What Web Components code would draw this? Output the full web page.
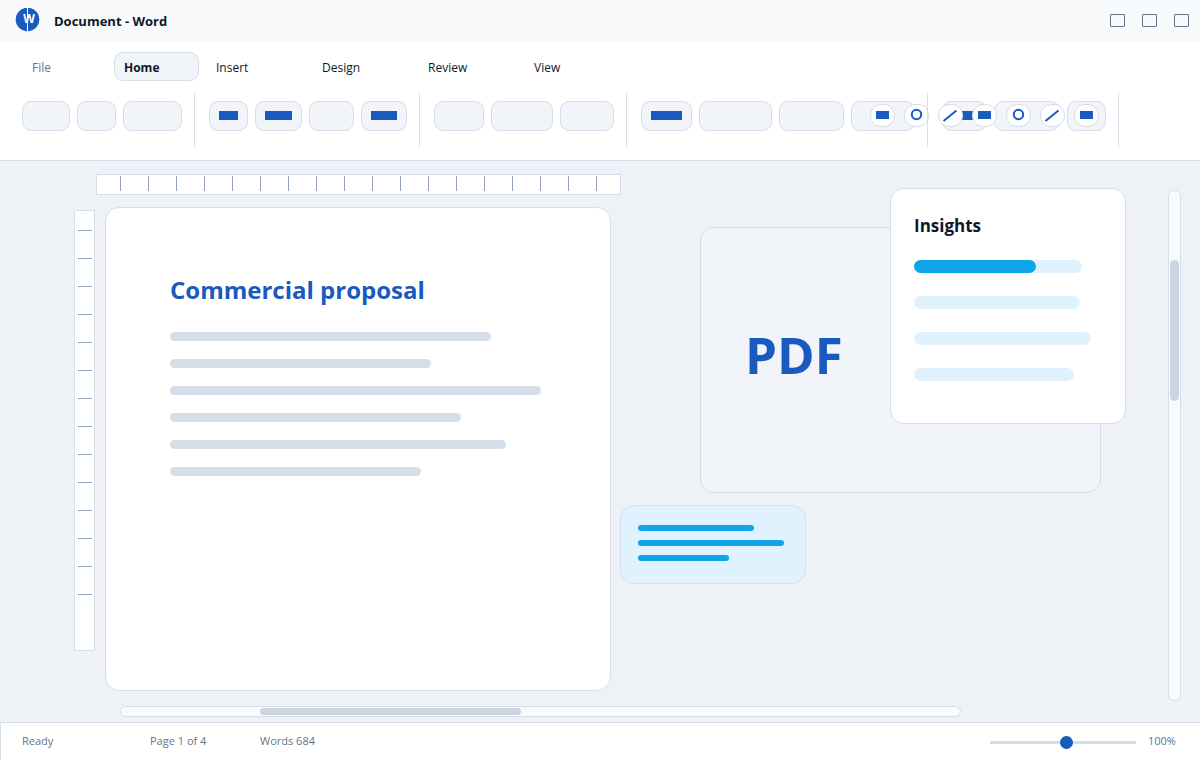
<!DOCTYPE html>
<html lang="en">
<head>
<meta charset="utf-8">
<title>Document - Word</title>
<style>
  :root {
    --ink: #0f172a;
    --muted: #64748b;
    --brand: #185abd;
    --line: #d6deea;
    --panel: #f1f4f9;
    --desk: #eef1f6;
    --bar: #f8fafc;
    --thumb: #cbd5e1;
    --sky: #e0f2fe;
    --accent: #0ea5e9;
  }
  html, body { height: 100%; margin: 0; }
  body { font: 12px/16px "Open Sans", "Noto Sans", sans-serif; color: var(--ink); }
</style>
</head>
<body>
<word-app>
  <title-bar slot="top">Document - Word</title-bar>
  <ribbon-bar slot="top"></ribbon-bar>
  <work-space>
    <doc-page slot="page" heading="Commercial proposal" lines="321,261,371,291,336,251"></doc-page>
    <pdf-card slot="stage">
      PDF
      <insight-card slot="over" heading="Insights"></insight-card>
    </pdf-card>
    <note-card slot="stage"></note-card>
  </work-space>
  <status-bar slot="bottom"></status-bar>
</word-app>

<script>
const define = (name, html, setup) => {
  const tpl = document.createElement('template');
  tpl.innerHTML = '<style>*{box-sizing:border-box}:host{display:block;box-sizing:border-box}</style>' + html;
  customElements.define(name, class extends HTMLElement {
    constructor() {
      super();
      this.attachShadow({ mode: 'open' }).append(tpl.content.cloneNode(true));
    }
    connectedCallback() { if (setup) setup(this, this.shadowRoot); }
  });
};

define('word-app', `
  <style>
    :host { display: flex; flex-direction: column; min-height: 100vh; }
    .main { flex: 1; display: grid; }
  </style>
  <slot name="top"></slot>
  <main class="main"><slot></slot></main>
  <slot name="bottom"></slot>`);

define('title-bar', `
  <style>
    :host { display: flex; align-items: center; height: 42px; padding: 0 11px 0 15px; background: var(--bar); }
    svg { display: block; flex: none; margin-bottom: 2px; }
    h1 { flex: 1; margin: 0 0 0 14px; font-size: 13px; line-height: 18px; font-weight: 700; }
    .win { display: flex; gap: 17px; margin-bottom: 1px; }
    button { width: 15px; height: 13px; padding: 0; border: 1px solid var(--muted); border-radius: 1px; background: none; }
  </style>
  <svg width="25" height="24" viewBox="0 0 25 24" aria-hidden="true">
    <circle cx="12.5" cy="11.5" r="11.8" fill="#185abd"/>
    <path d="M12.5 0V24" stroke="#fff" stroke-width="1"/>
    <text x="14" y="15" text-anchor="middle" font-size="12" font-weight="700" fill="#fff">W</text>
  </svg>
  <h1><slot></slot></h1>
  <div class="win">
    <button aria-label="Minimize"></button>
    <button aria-label="Maximize"></button>
    <button aria-label="Close"></button>
  </div>`);

define('ribbon-bar', `
  <style>
    :host { position: relative; height: 119px; padding: 10px 22px 0; background: #fff; border-bottom: 1px solid var(--line); }
    nav { display: flex; gap: 7px; }
    nav button { width: 99px; height: 29px; padding: 2px 0 0 9px; border: 1px solid transparent; border-radius: 9px;
      background: none; font: inherit; color: inherit; text-align: left; }
    nav .narrow { width: 85px; }
    nav .file { color: var(--muted); }
    nav .on { font-weight: 700; background: var(--panel); border-color: var(--line); }
    .tools { display: flex; margin-top: 12px; }
    .group { display: flex; align-items: flex-start; gap: 7px; height: 54px; padding-left: 14px; }
    .group:first-child { padding-left: 0; }
    .group::after { content: ""; position: relative; z-index: 1; width: 1px; height: 54px; margin-left: 5px; background: var(--line); }
    .group button { height: 30px; margin: 8px 0 0; padding: 9px; border: 1px solid var(--line); border-radius: 9px; background: var(--panel); }
    .group button i { display: block; height: 9px; margin-top: -1px; background: var(--brand); }
    .quick { position: absolute; right: 101px; top: 62px; display: flex; gap: 9px; }
    .quick button { display: block; width: 25px; height: 23px; padding: 0; border: 1px solid var(--line); border-radius: 11px; background: #fff; }
    svg { display: block; width: 23px; height: 21px; fill: none; stroke: var(--brand); stroke-width: 2; }
  </style>
  <nav aria-label="Tabs">
    <button class="narrow file">File</button><button class="narrow on">Home</button>
    <button>Insert</button><button>Design</button><button>Review</button><button>View</button>
  </nav>
  <div class="tools"></div>
  <div class="quick"></div>`, (el, root) => {
  // Tool widths by group; a trailing * marks a tool that carries a filled bar.
  const groups = ['48 39 59', '39* 47* 45 46*', '50 62 54', '51* 73 65 64', '45* 66 39'];
  root.querySelector('.tools').innerHTML = groups.map(g => '<div class="group">' +
    g.split(' ').map((t, i) => `<button aria-label="Tool ${i + 1}" style="width:${parseInt(t)}px">${t.endsWith('*') ? '<i></i>' : ''}</button>`).join('') +
    '</div>').join('');
  const icons = {
    Shape: '<path d="M5 6H18V14H5Z" fill="#185abd" stroke="none"/>',
    Circle: '<circle cx="11.5" cy="9.5" r="4.7"/>',
    Line: '<path d="M4.5 16L17.5 5.5"/>'
  };
  root.querySelector('.quick').innerHTML = ['Shape', 'Circle', 'Line', 'Shape', 'Circle', 'Line', 'Shape']
    .map(n => `<button aria-label="${n}"><svg viewBox="0 0 23 21">${icons[n]}</svg></button>`).join('');
});

define('ruler-strip', `
  <style>
    :host { display: flex; gap: 27px; overflow: hidden; background: #fff; border: 1px solid var(--line); height: 21px; padding: 1px 0 0 23px; }
    i { flex: none; width: 1px; height: 15px; background: #94a3b8; }
    :host([vertical]) { flex-direction: column; width: 21px; height: auto; padding: 19px 0 0 3px; }
    :host([vertical]) i { width: 14px; height: 1px; }
  </style>`, (el, root) => {
  for (let n = +el.getAttribute('ticks'); n > 0; n--) root.append(document.createElement('i'));
});

define('scroll-track', `
  <style>
    :host { height: 11px; padding: 1px 0 1px 139px; background: var(--bar); border: 1px solid var(--line); border-radius: 6px; }
    i { display: block; width: 261px; height: 7px; border-radius: 4px; background: var(--thumb); }
    :host([vertical]) { width: 13px; height: auto; padding: 69px 1px 0; }
    :host([vertical]) i { width: 9px; height: 141px; border-radius: 5px; }
  </style>
  <i></i>`);

define('work-space', `
  <style>
    :host { display: grid; grid-template-columns: minmax(0, 537fr) minmax(0, 557fr) 13px; grid-template-rows: 1fr 11px;
      row-gap: 15px; padding: 13px 19px 5px 74px; background: var(--desk); }
    .editor { display: flex; flex-direction: column; gap: 12px; }
    .top { margin: 0 -10px 0 22px; }
    .row { flex: 1; display: flex; gap: 10px; }
    .side { flex: none; margin: 3px 0 40px; }
    ::slotted(doc-page) { flex: 1; }
    .stage { display: flex; flex-direction: column; align-items: flex-start; gap: 12px; padding: 53px 0 0 9px; }
    .v { grid-column: 3; grid-row: 1 / 3; margin: 16px 0; }
    .h { grid-column: 1 / 3; grid-row: 2; margin: 0 207px 0 46px; }
  </style>
  <section class="editor">
    <ruler-strip class="top" ticks="18"></ruler-strip>
    <div class="row"><ruler-strip class="side" vertical ticks="14"></ruler-strip><slot name="page"></slot></div>
  </section>
  <section class="stage"><slot name="stage"></slot></section>
  <scroll-track class="v" vertical></scroll-track>
  <scroll-track class="h"></scroll-track>`);

define('doc-page', `
  <style>
    :host { padding: 64px; background: #fff; border: 1px solid var(--line); border-radius: 14px; }
    h2 { margin: 0 0 24px; font-size: 24px; line-height: 36px; font-weight: 700; color: var(--brand); white-space: nowrap; }
    .lines { display: grid; gap: 18px; }
    i { display: block; height: 9px; border-radius: 5px; background: var(--line); }
  </style>
  <h2></h2><div class="lines"></div>`, (el, root) => {
  root.querySelector('h2').textContent = el.getAttribute('heading');
  root.querySelector('.lines').innerHTML = el.getAttribute('lines').split(',').map(w => `<i style="width:${w}px"></i>`).join('');
});

define('pdf-card', `
  <style>
    :host { position: relative; align-self: stretch; margin: 0 67px 0 80px; height: 266px; padding: 90px 44px 0;
      background: var(--panel); border: 1px solid var(--line); border-radius: 14px;
      font-size: 51px; line-height: 72px; font-weight: 700; color: var(--brand); }
    ::slotted([slot=over]) { position: absolute; right: -26px; top: -40px; }
  </style>
  <slot></slot><slot name="over"></slot>`);

define('insight-card', `
  <style>
    :host { width: 236px; height: 236px; padding: 23px; background: #fff; border: 1px solid var(--line); border-radius: 14px;
      font-size: 12px; line-height: 16px; color: var(--ink); }
    h3 { margin: 0 0 20px; font-size: 17px; line-height: 28px; font-weight: 700; }
    .bars { display: grid; gap: 23px; }
    i { display: block; height: 13px; border-radius: 7px; background: var(--sky); }
    i i { width: 122px; background: var(--accent); }
  </style>
  <h3></h3>
  <div class="bars">
    <i style="width:168px"><i></i></i><i style="width:166px"></i><i style="width:177px"></i><i style="width:160px"></i>
  </div>`, (el, root) => { root.querySelector('h3').textContent = el.getAttribute('heading'); });

define('note-card', `
  <style>
    :host { display: grid; align-content: start; gap: 9px; width: 186px; height: 79px; padding: 19px 17px; background: var(--sky);
      border: 1px solid var(--line); border-radius: 14px; }
    i { display: block; height: 6px; border-radius: 3px; background: var(--accent); }
  </style>
  <i style="width:116px"></i><i style="width:146px"></i><i style="width:91px"></i>`);

define('status-bar', `
  <style>
    :host { display: flex; align-items: center; height: 38px; padding: 0 24px 2px 21px; background: #fff; color: var(--muted);
      font-size: 11px; border-top: 1px solid var(--line); border-left: 1px solid var(--line); }
    .state { width: 128px; }
    .pages { width: 110px; }
    .words { flex: 1; }
    input { appearance: none; width: 146px; height: 13px; margin: 4px 12px 0 0; background: linear-gradient(var(--line), var(--line)) center / 100% 3px no-repeat; }
    input::-webkit-slider-thumb { appearance: none; width: 13px; height: 13px; border-radius: 50%; background: var(--brand); }
    output { width: 28px; white-space: nowrap; }
  </style>
  <span class="state">Ready</span><span class="pages">Page 1 of 4</span><span class="words">Words 684</span>
  <input id="zoom" type="range" min="0" max="100" value="53" aria-label="Zoom">
  <output for="zoom">100%</output>`);
</script>
</body>
</html>
